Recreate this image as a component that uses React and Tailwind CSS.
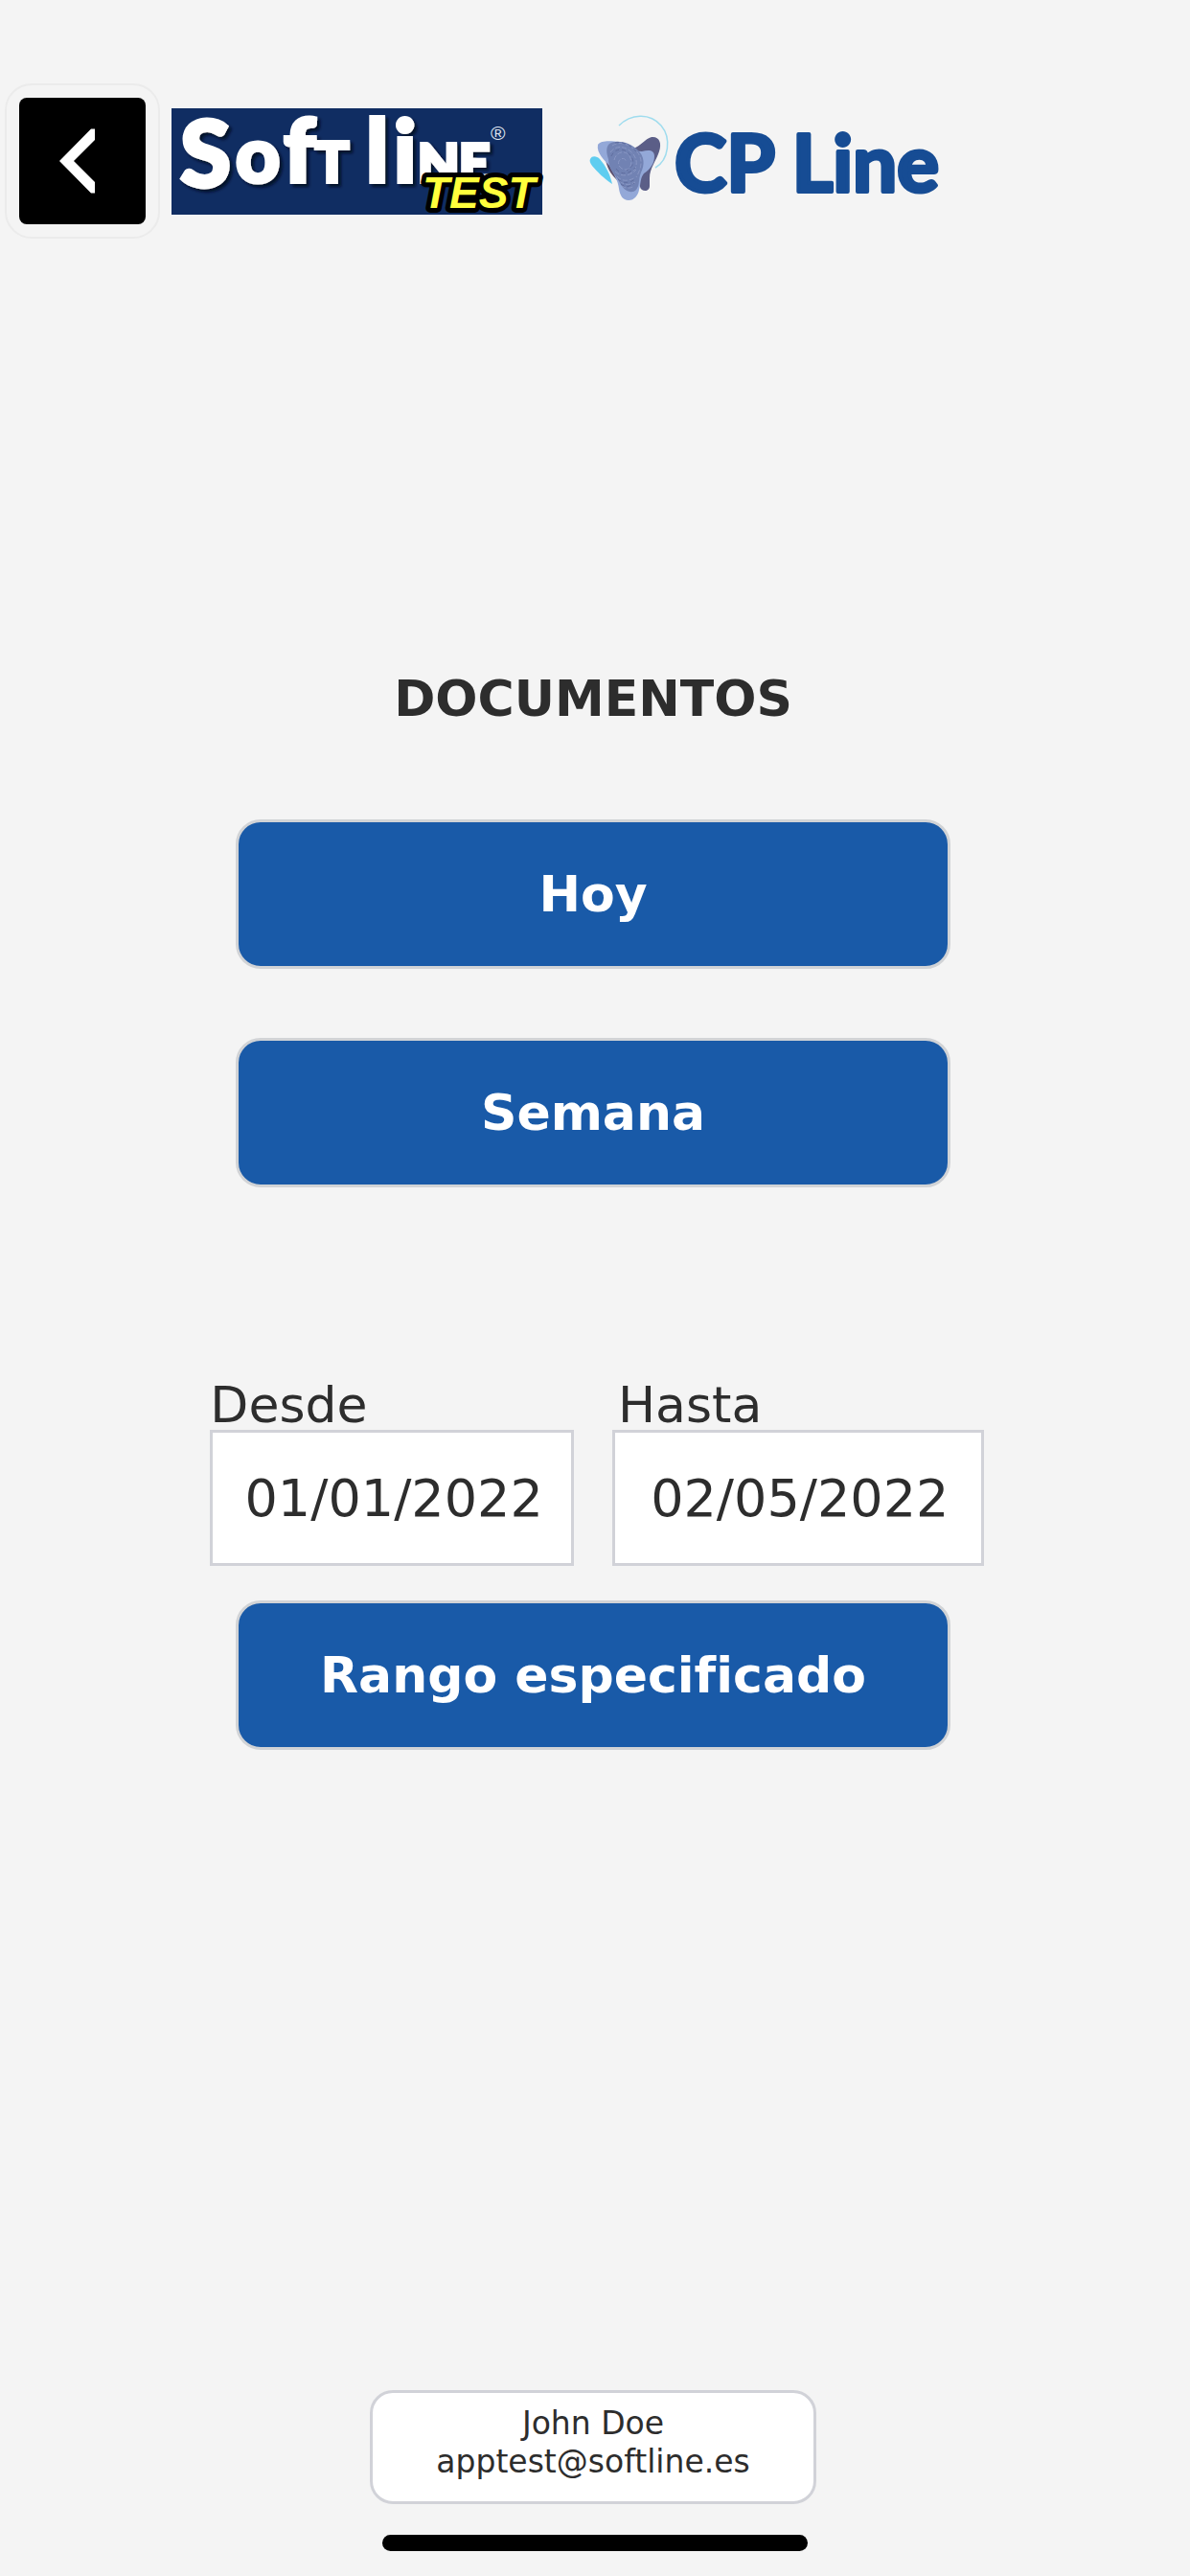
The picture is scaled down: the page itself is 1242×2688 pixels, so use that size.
import React, { useState } from 'react';

const BackIcon = () => (
    <svg className="w-full h-full" viewBox="0 0 132 132" fill="none" aria-hidden="true">
        <path d="M79 32.5V44L57 66l22 22v11.500h-4L42 66l33-33.500z" fill="#fff" />
    </svg>
);

const SoftLineLogo = () => (
    <svg className="w-[387px] h-[111px] shrink-0 overflow-visible" viewBox="0 0 387 111" role="img" aria-label="Soft Line Test">
        <defs>
            <filter id="softline-shadow" x="-10%" y="-10%" width="120%" height="130%">
                <feDropShadow dx="3" dy="3" stdDeviation="1.500" floodColor="#020b20" floodOpacity="0.9" />
            </filter>
        </defs>
        <rect width="387" height="111" fill="#102d62" />
        <g className="font-['Lato',sans-serif] font-black" fill="#fff" stroke="#fff" strokeWidth="4" filter="url(#softline-shadow)">
            <text fontSize="96" x="9" y="82">S</text>
            <text fontSize="80" x="67" y="77">o</text>
            <text fontSize="92" x="117" y="77">f</text>
            <text fontSize="58" x="150" y="77">T</text>
            <text fontSize="92" x="203" y="77">l</text>
            <text fontSize="90" x="232" y="77">i</text>
            <text fontSize="56" x="257" y="77">N</text>
            <text fontSize="56" x="300" y="77">E</text>
        </g>
        <text x="333" y="33" fontSize="21" fill="#dfe4ee" className="font-['Liberation_Sans',sans-serif]">®</text>
        <text
            x="262"
            y="104"
            fontSize="46"
            fill="#ffff3c"
            stroke="#000"
            strokeWidth="10"
            strokeLinejoin="round"
            paintOrder="stroke"
            className="font-['Liberation_Sans',sans-serif] font-bold italic"
        >
            TEST
        </text>
    </svg>
);

const CpLineLogo = () => (
    <svg className="w-[387px] h-[111px] shrink-0 overflow-visible" viewBox="0 3 387 111" role="img" aria-label="CP Line">
        <path d="M61 45C69 42 73 35 80 33c8-1 11 6 8 15-3 10-10 17-10 28v8c0 7-9 6-10 1z" fill="#5b5e87" />
        <path d="M16 56c2-4 7-3 10 0 6 7 10 14 13 26-8-5-16-13-21-19-2-3-3-5-2-7z" fill="#5fcdf0" />
        <path d="M32 57c3 12 7 16 13 22l8-11z" fill="#5b4f6e" />
        <path d="M24 41c3-5 14-4 22-3 9 2 14 10 24 10 8-2 13-1 13 5 0 8-5 14-11 18-4 5-3 10-5 17-1 6-5 11-11 11s-9-5-10-12c-1-9-5-14-10-24-4-5-14-13-12-22z" fill="#93a8d8" />
        <path d="M36 40c8-5 22-1 29 6 8 7 8 16 4 24-3 8-1 13-5 18-5 5-13 1-17-7-4-8-12-14-12-25-2-6-3-12 1-16z" fill="#7182b3" />
        <g fill="none" stroke="#8997c4" strokeWidth="1" strokeDasharray="5 2">
            <path d="M39 42c9-6 21 0 27 8s2 18-2 25" />
            <path d="M37 49c6-9 18-6 24 2s3 16-3 20" />
            <path d="M41 57c2-9 12-11 16-4s1 14-4 14-9-5-7-9 8-3 7 1" />
            <path d="M42 69c6 6 16 5 22-2M44 74c5 6 13 5 19 1M47 79c5 5 11 4 16 1M49 84c4 3 9 3 13 0" />
        </g>
        <g fill="none" stroke="#5f6d9e" strokeWidth="1" strokeDasharray="4 3">
            <path d="M42 39c9-2 19 4 24 12M38 53c4-9 14-9 20-1s1 13-4 16" />
            <path d="M43 66c5 7 13 6 20-1M45 77c5 5 12 4 18 0M48 82c5 4 9 3 14-1" />
        </g>
        <path d="M46 21C58 9 78 7 90 21c11 13 8 36-6 44" fill="none" stroke="#9fdcee" strokeWidth="1.500" />
        <text
            x="104"
            y="90"
            fontSize="82"
            fill="#164c94"
            stroke="#164c94"
            strokeWidth="4"
            strokeLinejoin="round"
            className="font-['Lato',sans-serif] font-bold"
        >
            CP Line
        </text>
    </svg>
);

const ActionButton = ({ children, className = '' }) => (
    <button
        type="button"
        className={`w-3/5 h-[156px] mr-1 rounded-[26px] border-3 border-[#d1d3d6] bg-[#195aa8] text-[52px] leading-[64px] font-bold text-white ${className}`}
    >
        {children}
    </button>
);

const DateField = ({ id, label, value, onChange, labelClass = '' }) => (
    <div className="flex flex-col min-w-0">
        <label htmlFor={id} className={`text-[52px] leading-[52px] ${labelClass}`}>{label}</label>
        <input
            id={id}
            type="text"
            value={value}
            onChange={(e) => onChange(e.target.value)}
            className="w-full h-[142px] border-3 border-[#d1d2d8] bg-white pl-1 text-center text-[54px] leading-[64px] focus:outline-none"
        />
    </div>
);

export default function App() {
    const [from, setFrom] = useState('01/01/2022');
    const [to, setTo] = useState('02/05/2022');

    return (
        <div className="min-h-screen flex flex-col bg-[#f4f4f4] text-[#2d2d2d] font-[Verdana,'DejaVu_Sans',sans-serif] [font-variant-ligatures:none]">
            <header className="flex items-center pt-[87px] pl-[5px]">
                <button type="button" aria-label="Volver" className="w-[162px] h-[162px] shrink-0 rounded-[28px] border-2 border-[#ebebeb] p-[13px]">
                    <span className="block w-full h-full rounded-lg bg-black">
                        <BackIcon />
                    </span>
                </button>
                <div className="flex items-center ml-3 gap-[34px]">
                    <SoftLineLogo />
                    <CpLineLogo />
                </div>
            </header>

            <main className="flex flex-col items-center">
                <h1 className="mt-[448px] mr-1 text-[52px] leading-[64px] font-bold">DOCUMENTOS</h1>
                <ActionButton className="mt-[94px]">Hoy</ActionButton>
                <ActionButton className="mt-[72px]">Semana</ActionButton>

                <div className="mt-[201px] ml-1 w-[65%] grid grid-cols-[47fr_48fr] gap-10">
                    <DateField id="desde" label="Desde" value={from} onChange={setFrom} />
                    <DateField id="hasta" label="Hasta" value={to} onChange={setTo} labelClass="pl-1.5" />
                </div>

                <ActionButton className="mt-9">Rango especificado</ActionButton>
            </main>

            <footer className="mt-auto flex flex-col items-center pb-[26px]">
                <div className="mr-1 w-[466px] h-[119px] rounded-3xl border-3 border-[#d1d2d8] bg-white pt-3 text-center text-[33px] leading-[40px]">
                    <p>John Doe</p>
                    <p>apptest@softline.es</p>
                </div>
                <div className="mt-8 w-[444px] h-[17px] rounded-full bg-black" />
            </footer>
        </div>
    );
}
